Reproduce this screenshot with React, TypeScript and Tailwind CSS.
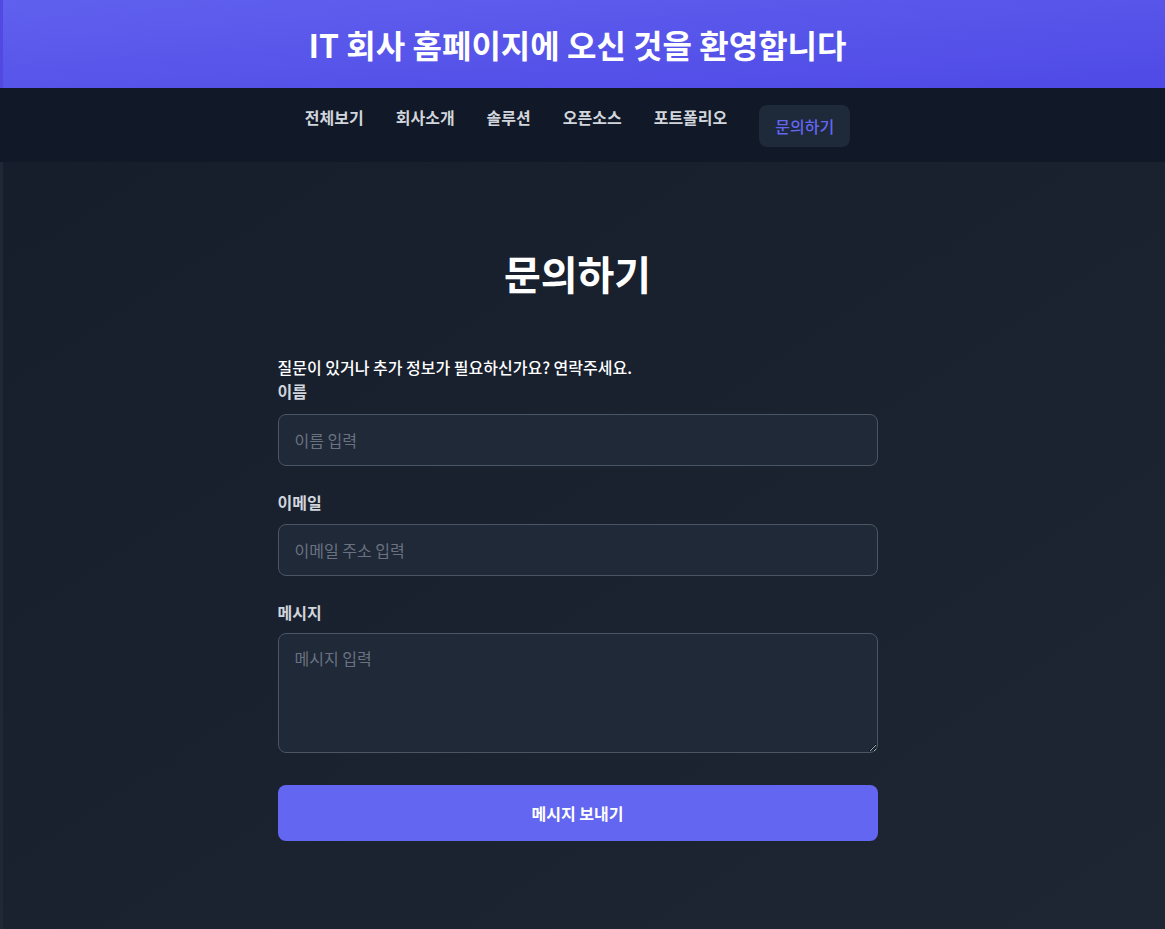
const font = { fontFamily: '"Noto Sans CJK KR", "Noto Sans", sans-serif' };

const navItems = ["전체보기", "회사소개", "솔루션", "오픈소스", "포트폴리오"];

export default function App() {
  return (
    <div className="min-h-[929px] flex flex-col bg-gray-900" style={font}>
      <header className="h-[88px] flex items-center justify-center pr-[10px] bg-gradient-to-br from-[#6060ee] to-[#4f49e6] shadow-[inset_3px_0_0_#5248e2]">
        <h1 className="text-[32px] font-bold text-white">IT 회사 홈페이지에 오신 것을 환영합니다</h1>
      </header>

      <nav className="h-[74px] bg-[#111827] pt-[17px]">
        <ul className="flex items-start justify-center gap-8 pr-[10px]">
          {navItems.map((item) => (
            <li key={item} className="text-base font-semibold leading-6 text-gray-300">
              {item}
            </li>
          ))}
          <li className="rounded-lg bg-gray-800 px-[16px] py-[9px] text-base font-medium leading-6 text-[#6366f1]">
            문의하기
          </li>
        </ul>
      </nav>

      <main className="flex-1 bg-gradient-to-br from-[#161d2b] to-[#1e2634] shadow-[inset_3px_0_0_#1f2836] pt-[89px] pb-20 pr-[10px]">
        <div className="mx-auto w-[600px]">
          <h2 className="text-center text-[40px] font-bold leading-[44px] text-white">문의하기</h2>
          <p className="mt-[60px] text-base font-medium leading-6 text-white">
            질문이 있거나 추가 정보가 필요하신가요? 연락주세요.
          </p>
          <form className="flex flex-col">
            <label className="text-base font-semibold leading-6 text-gray-300">이름</label>
            <input
              placeholder="이름 입력"
              className="mt-[11px] h-[52px] rounded-lg border border-gray-600 bg-[#1f2937] px-4 text-base text-white placeholder:text-gray-500 outline-none"
            />
            <label className="mt-[24px] text-base font-semibold leading-6 text-gray-300">이메일</label>
            <input
              placeholder="이메일 주소 입력"
              className="mt-[10px] h-[52px] rounded-lg border border-gray-600 bg-[#1f2937] px-4 text-base text-white placeholder:text-gray-500 outline-none"
            />
            <label className="mt-[24px] text-base font-semibold leading-6 text-gray-300">메시지</label>
            <textarea
              placeholder="메시지 입력"
              className="mt-[9px] h-[120px] rounded-lg border border-gray-600 bg-[#1f2937] px-4 py-3 text-base text-white placeholder:text-gray-500 outline-none"
            />
            <button
              type="button"
              className="mt-8 h-14 rounded-lg bg-[#6366f1] text-base font-bold text-white"
            >
              메시지 보내기
            </button>
          </form>
        </div>
      </main>
    </div>
  );
}
